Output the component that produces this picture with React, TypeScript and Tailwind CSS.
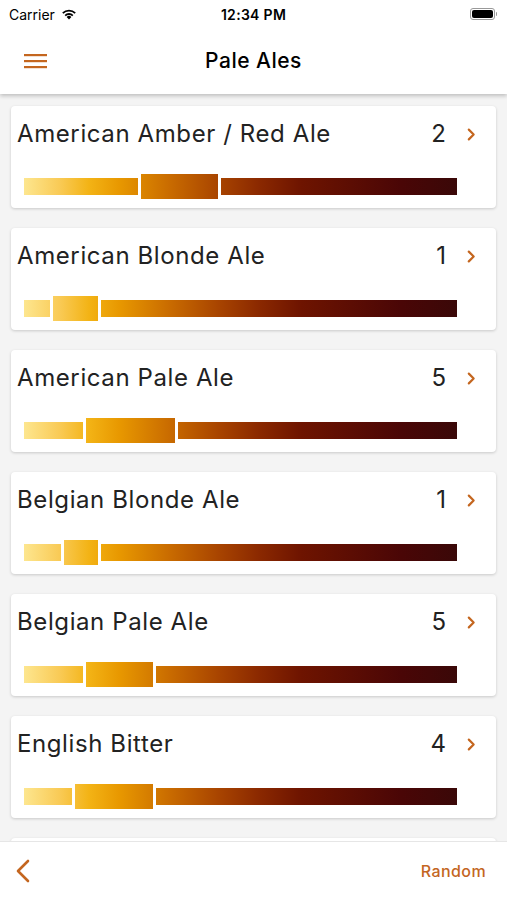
import React from "react";

interface Style {
  name: string;
  count: number;
  // bar segments in px, relative to the 433px colour scale
  low: number;
  tall: number;
}

const styles: Style[] = [
  { name: "American Amber / Red Ale", count: 2, low: 114, tall: 77 },
  { name: "American Blonde Ale", count: 1, low: 26, tall: 45 },
  { name: "American Pale Ale", count: 5, low: 59, tall: 89 },
  { name: "Belgian Blonde Ale", count: 1, low: 37, tall: 34 },
  { name: "Belgian Pale Ale", count: 5, low: 59, tall: 67 },
  { name: "English Bitter", count: 4, low: 48, tall: 78 },
];

const GAP = 3;

const Segment: React.FC<{ width?: number; offset: number; tall?: boolean }> = ({
  width,
  offset,
  tall,
}) => (
  <div
    className={`bg-[linear-gradient(to_right,#fde68f_0%,#f9ca55_8.3%,#f3b315_15%,#e89800_22%,#c86a00_34%,#a84400_45%,#8a2800_54.5%,#6e1400_64%,#4a0606_87%,#3a0808_100%)] bg-[length:433px_100%] bg-no-repeat ${
      tall ? "h-[25px]" : "h-[17px]"
    } ${width === undefined ? "flex-1" : "shrink-0"}`}
    style={{
      width: width,
      backgroundPosition: `-${offset}px 0`,
    }}
  />
);

const ColorBar: React.FC<{ low: number; tall: number }> = ({ low, tall }) => (
  <div className="flex items-center gap-[3px] h-[25px] w-[433px]">
    <Segment width={low} offset={0} />
    <Segment width={tall} offset={low + GAP} tall />
    <Segment offset={low + tall + GAP * 2} />
  </div>
);

const Chevron: React.FC<{ className?: string }> = ({ className }) => (
  <svg className={className} viewBox="0 0 8 12" fill="none">
    <path
      d="M1.5 1.5L6 6l-4.5 4.5"
      stroke="currentColor"
      strokeWidth={2}
      strokeLinecap="round"
      strokeLinejoin="round"
    />
  </svg>
);

const StyleCard: React.FC<{ style: Style }> = ({ style }) => (
  <div className="mx-[11px] h-[102px] shrink-0 bg-white rounded-[4px] shadow-[0_1px_3px_rgba(0,0,0,0.18)] flex flex-col">
    <div className="h-[56px] flex items-center pl-[6px] pr-[20px]">
      <span className="flex-1 text-[24px] tracking-[0.6px] text-[#222]">
        {style.name}
      </span>
      <span className="text-[24px] text-[#222] mr-[21px]">{style.count}</span>
      <Chevron className="w-[9px] h-[13px] text-[#c4661f]" />
    </div>
    <div className="mt-[12px] pl-[13px]">
      <ColorBar low={style.low} tall={style.tall} />
    </div>
  </div>
);

const StatusBar: React.FC = () => (
  <div className="h-[28px] flex items-center px-[9px] text-[14px] text-black relative">
    <div className="flex items-center gap-[6px]">
      <span>Carrier</span>
      <svg className="w-[16px] h-[12px]" viewBox="0 0 16 12">
        <path d="M8 11.5L5.6 8.9a3.4 3.4 0 0 1 4.8 0z" fill="black" />
        <path
          d="M3.6 6.9a6.3 6.3 0 0 1 8.8 0l-1.2 1.3a4.6 4.6 0 0 0-6.4 0z"
          fill="black"
        />
        <path
          d="M1.2 4.4a9.8 9.8 0 0 1 13.6 0l-1.2 1.3a8 8 0 0 0-11.2 0z"
          fill="black"
        />
      </svg>
    </div>
    <span className="absolute left-1/2 -translate-x-1/2 font-semibold tracking-[0.3px]">
      12:34 PM
    </span>
    <div className="ml-auto flex items-center mr-[1px]">
      <div className="w-[25px] h-[12px] rounded-[3px] border border-[#999] p-[1px]">
        <div className="w-full h-full bg-black rounded-[2px]" />
      </div>
      <div className="w-[1.5px] h-[4px] bg-[#999] rounded-r-sm ml-[1px]" />
    </div>
  </div>
);

export default function App() {
  return (
    <div className="w-[507px] h-[900px] flex flex-col bg-[#f4f4f4] overflow-hidden font-['Inter','Liberation_Sans',sans-serif]">
      <header className="bg-white shadow-[0_2px_4px_rgba(0,0,0,0.22)] z-10 shrink-0">
        <StatusBar />
        <div className="h-[66px] flex items-center relative px-[24px]">
          <svg className="w-[23px] h-[18px]" viewBox="0 0 23 18">
            <rect x="0" y="2" width="23" height="2.2" fill="#c4661f" />
            <rect x="0" y="8" width="23" height="2.2" fill="#c4661f" />
            <rect x="0" y="14" width="23" height="2.2" fill="#c4661f" />
          </svg>
          <h1 className="absolute left-1/2 -translate-x-1/2 text-[21px] font-medium tracking-[0.5px] text-black">
            Pale Ales
          </h1>
        </div>
      </header>

      <main className="flex-1 overflow-hidden flex flex-col gap-[20px] pt-[12px]">
        {styles.map((s) => (
          <StyleCard key={s.name} style={s} />
        ))}
        {/* next card peeking under the toolbar */}
        <div className="mx-[11px] h-[102px] shrink-0 bg-white rounded-[4px] shadow-[0_1px_3px_rgba(0,0,0,0.18)]" />
      </main>

      <footer className="h-[59px] shrink-0 bg-white border-t border-[#e6e6e6] flex items-center justify-between pl-[15px] pr-[21px] z-10">
        <svg className="w-[16px] h-[24px]" viewBox="0 0 16 24" fill="none">
          <path
            d="M13 2L3 12l10 10"
            stroke="#c4661f"
            strokeWidth={2.6}
            strokeLinecap="round"
            strokeLinejoin="round"
          />
        </svg>
        <span className="text-[16px] font-medium tracking-[0.4px] text-[#c4661f]">
          Random
        </span>
      </footer>
    </div>
  );
}
